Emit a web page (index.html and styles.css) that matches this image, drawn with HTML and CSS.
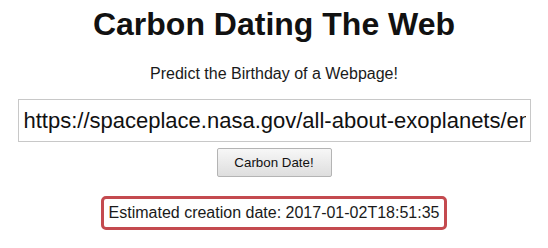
FILE: index.html
```html
<!DOCTYPE html>
<html>
<head>
<meta charset="utf-8">
<link rel="stylesheet" href="styles.css">
</head>
<body>
<main class="page">
  <h1 class="title">Carbon Dating The Web</h1>
  <p class="subtitle">Predict the Birthday of a Webpage!</p>
  <input class="url" type="text" value="https://spaceplace.nasa.gov/all-about-exoplanets/en/">
  <button class="go" type="button">Carbon Date!</button>
  <div class="result">Estimated creation date: 2017-01-02T18:51:35</div>
</main>
</body>
</html>
```
FILE: styles.css
```css
html, body {
  margin: 0;
  padding: 0;
  background: #fff;
}
body {
  font-family: "Liberation Sans", Arial, sans-serif;
  color: #111;
}
.page {
  display: flex;
  flex-direction: column;
  align-items: center;
}
.title {
  margin: 6px 0 0;
  font-size: 32px;
  line-height: 37px;
  font-weight: bold;
  color: #111;
}
.subtitle {
  margin: 22px 0 0;
  font-size: 16px;
  line-height: 18px;
  color: #1a1a1a;
}
.url {
  box-sizing: border-box;
  margin-top: 16px;
  width: 513px;
  height: 43px;
  border: 1px solid #c8c8c8;
  padding: 0 4px 0 5px;
  font-family: "Liberation Sans", Arial, sans-serif;
  font-size: 22px;
  color: #111;
  outline: none;
}
.go {
  box-sizing: border-box;
  margin-top: 6px;
  width: 115px;
  height: 29px;
  border: 1px solid #b4b4b4;
  border-radius: 2px;
  background: linear-gradient(#f7f7f7, #dedede);
  font-family: "Liberation Sans", Arial, sans-serif;
  font-size: 13.333px;
  color: #111;
  padding: 0;
}
.result {
  box-sizing: border-box;
  margin-top: 19px;
  padding: 0 5px;
  height: 34px;
  display: flex;
  align-items: center;
  border: 3px solid #c44a4f;
  border-radius: 5px;
  font-size: 16px;
  color: #1a1a1a;
}
```
